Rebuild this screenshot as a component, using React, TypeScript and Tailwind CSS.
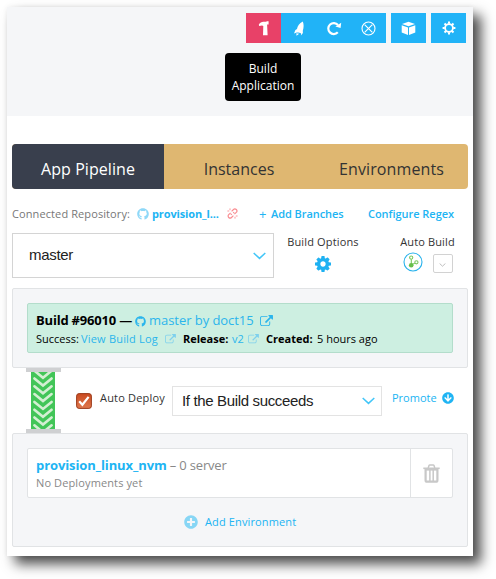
import React from "react";
import { FaGithub, FaPlusCircle, FaArrowCircleDown } from "react-icons/fa";

type IconProps = { className?: string };

const ExternalLink = ({ className }: IconProps) => (
  <svg viewBox="0 0 1792 1664" className={className} fill="currentColor">
    <path d="M1408 928v320q0 119-84.5 203.5t-203.5 84.5h-832q-119 0-203.5-84.5t-84.5-203.5v-832q0-119 84.5-203.5t203.5-84.5h704q14 0 23 9t9 23v64q0 14-9 23t-23 9h-704q-66 0-113 47t-47 113v832q0 66 47 113t113 47h832q66 0 113-47t47-113v-320q0-14 9-23t23-9h64q14 0 23 9t9 23zm384-864v512q0 26-19 45t-45 19-45-19l-176-176-652 652q-10 10-23 10t-23-10l-114-114q-10-10-10-23t10-23l652-652-176-176q-19-19-19-45t19-45 45-19h512q26 0 45 19t19 45z" />
  </svg>
);

const Cog = ({ className }: IconProps) => (
  <svg viewBox="128 128 1536 1536" className={className} fill="currentColor">
    <path d="M1152 896q0-106-75-181t-181-75-181 75-75 181 75 181 181 75 181-75 75-181zm512-109v222q0 12-8 23t-20 13l-185 28q-19 54-39 91 35 50 107 138 10 12 10 25t-9 23q-27 37-99 108t-94 71q-12 0-26-9l-138-108q-44 23-91 38-16 136-29 186-7 28-36 28h-222q-14 0-24.5-8.5t-11.5-21.5l-28-184q-49-16-90-37l-141 107q-10 9-25 9-14 0-25-11-126-114-165-168-7-10-7-23 0-12 8-23 15-21 51-66.5t54-70.5q-27-50-41-99l-183-27q-13-2-21-12.5t-8-23.5v-222q0-12 8-23t19-13l186-28q14-46 39-92-40-57-107-138-10-12-10-24 0-10 9-23 26-36 98.5-107.5t94.5-71.5q13 0 26 10l138 107q44-23 91-38 16-136 29-186 7-28 36-28h222q14 0 24.5 8.5t11.5 21.5l28 184q49 16 90 37l142-107q9-9 24-9 13 0 25 10 129 119 165 170 7 8 7 22 0 12-8 23-15 21-51 66.5t-54 70.5q26 50 41 98l183 28q13 2 21 12.5t8 23.5z" />
  </svg>
);

const Trash = ({ className }: IconProps) => (
  <svg viewBox="0 0 17 19" className={className} fill="none" stroke="currentColor">
    <path d="M5.2 4 6 1.6q.2-.6.9-.6h3.2q.7 0 .9.6l.8 2.4" strokeWidth="1.5" />
    <path d="M.3 4.3h16.4" strokeWidth="1.6" />
    <path d="M2.6 5v11.2q0 1.5 1.5 1.5h8.8q1.5 0 1.5-1.5V5" strokeWidth="2.2" />
    <path d="M2.6 5.8h11.8" strokeWidth="1.6" />
    <path d="M6.9 6v11M10.2 6v11" strokeWidth="1.5" />
  </svg>
);

const Chevron = ({ className }: IconProps) => (
  <svg viewBox="0 0 13 8" className={className} fill="none" stroke="currentColor" strokeWidth="1.5">
    <path d="M.7 1 6.5 6.4 12.3 1" />
  </svg>
);

const Hammer = () => (
  <svg viewBox="0 0 12 15" className="h-[15px] w-3" fill="currentColor">
    <path d="M.8 3.7C2 1.6 3.6.8 5.4.8H8l1-.6h1.6v3.4l-1.5-.2.5 10.8H5L5.3 5 4 4.4 1.2 5Z" />
  </svg>
);

const Rocket = () => (
  <svg viewBox="0 0 12 15" className="h-[15px] w-3" fill="currentColor">
    <path d="M9.8.6C6.3 2.2 4.6 5 4 8L2.4 9 1 12.6l2.8-1.2h1.5l2 .7.8.3-.2 2.1 2-2.4-.1-2.4C10.8 6.8 11 3.6 9.8.6Z" />
    <path d="m3.4 12.2 2.8.6-2.7 2Z" />
  </svg>
);

const Redo = () => (
  <svg viewBox="0 0 16 15" className="h-[15px] w-4" fill="none" stroke="currentColor" strokeWidth="2.2">
    <path d="M11.8 11.3A5.5 5.5 0 1 1 12 4" />
    <path d="M15.2 1.8 14.6 7 9.4 5.6Z" fill="currentColor" stroke="none" />
  </svg>
);

const CircleX = () => (
  <svg viewBox="0 0 15 15" className="size-[15px]" fill="none" stroke="currentColor" strokeWidth="1.1">
    <circle cx="7.5" cy="7.5" r="6.5" />
    <path d="m3.6 3.6 7.8 7.8m0-7.8-7.8 7.8" />
  </svg>
);

const Box = () => (
  <svg viewBox="0 0 15 15" className="size-[15px]" fill="currentColor">
    <path d="M7.5.8 14 3 7.5 5.3 1 3ZM.7 4.2 7 6.4v7.5L.7 11.5Zm13.6 0L8 6.4v7.5l6.3-2.4Z" />
  </svg>
);

const GearOutline = () => (
  <svg viewBox="0 0 14 14" className="size-3.5" fill="none" stroke="currentColor">
    <circle cx="7" cy="7" r="3.9" strokeWidth="1.8" />
    <path d="M7 .6v2.2M7 11.2v2.2M.6 7h2.2M11.2 7h2.2M2.5 2.5 4 4m6 6 1.5 1.5m0-9L10 4m-6 6-1.5 1.5" strokeWidth="2" />
  </svg>
);

const BrokenLink = () => (
  <svg viewBox="0 0 11 11" className="-mt-[2px] h-[11px] w-[11px] shrink-0 text-[#f98d92]" fill="none" stroke="currentColor" strokeWidth="1.2">
    <path d="m4.6 3.4 1.9-1.9a1.8 1.8 0 0 1 2.8 2.8L7.4 6.2M6.4 7.6 4.5 9.5a1.8 1.8 0 0 1-2.8-2.8l1.9-1.9M6.2 4.2l1 1M3.8 5.8l1 1" />
    <path d="M3 .4v1.8M.4 3h1.8M8 8.8v1.8M8.8 8h1.8" strokeWidth=".9" />
  </svg>
);

const Branch = () => (
  <svg viewBox="0 0 20 20" className="size-5 shrink-0" fill="none">
    <circle cx="10" cy="10" r="9" stroke="#28b2ec" strokeWidth="1.1" />
    <g stroke="#7cc95f" strokeWidth="1.1">
      <circle cx="8.2" cy="5.6" r="1.6" />
      <circle cx="13.4" cy="10.3" r="1.6" />
      <path d="M8.3 7.2v5M9 12.4l2.8-1.2" />
    </g>
    <circle cx="8.2" cy="13.2" r="2.3" fill="#67be4b" />
  </svg>
);

const chevrons = [-9.1, -1.3, 6.5, 14.3, 22.1, 29.9, 37.7, 45.5, 53.3];

const Conveyor = () => (
  <div className="ml-[14px] flex h-[65px] w-[35px] shrink-0 flex-col items-start">
    <div className="h-1 w-full bg-[#cfd0d2]" />
    <svg viewBox="0 0 24 57" className="ml-[5px] h-[57px] w-6 bg-[#42c558]" fill="none" stroke="#d3efd2" strokeWidth="2.6">
      {chevrons.map((y) => (
        <path key={y} d={`M3.4 ${y}l8.6 7 8.6-7`} strokeLinecap="round" />
      ))}
    </svg>
    <div className="h-1 w-full bg-[#cfd0d2]" />
  </div>
);

const Tool = ({ children, className }: { children: React.ReactNode; className: string }) => (
  <button className={`flex h-[30px] w-[35px] items-center justify-center text-white ${className}`}>{children}</button>
);

export default function App() {
  return (
    <div className="h-[579px] w-[496px] overflow-hidden bg-white pt-[7px] pl-[7px] font-['Open_Sans',sans-serif] text-[11px] whitespace-nowrap text-[#333]">
      <main className="h-[549px] w-[466px] bg-white shadow-[8px_8px_12px_rgba(0,0,0,0.7),0_0_5px_rgba(0,0,0,0.06)]">
        <header className="relative flex h-[109px] items-start bg-[#f5f6f8] pt-[6px] pl-[239px]">
          <Tool className="bg-[#e84168]"><Hammer /></Tool>
          <Tool className="bg-[#21b3f7]"><Rocket /></Tool>
          <Tool className="bg-[#21b3f7]"><Redo /></Tool>
          <Tool className="bg-[#21b3f7]"><CircleX /></Tool>
          <Tool className="ml-[5px] bg-[#21b3f7]"><Box /></Tool>
          <Tool className="ml-[5px] bg-[#21b3f7]"><GearOutline /></Tool>
          <div className="absolute top-[46px] left-[218px] flex h-12 w-[76px] flex-col items-center justify-center rounded bg-black text-[12px] leading-[17px] text-white">
            <span>Build</span>
            <span>Application</span>
          </div>
        </header>

        <section className="px-[5px] pt-7">
          <nav className="flex h-[45px] overflow-hidden rounded bg-[#dfb771] text-[16px] leading-[50px]">
            <div className="w-[152px] bg-[#393f4d] text-center tracking-[0.06px] text-white">App Pipeline</div>
            <div className="w-[152px] pr-[2px] text-center">Instances</div>
            <div className="w-[152px] pr-[1px] text-center tracking-[0.1px]">Environments</div>
          </nav>

          <div className="flex h-11 items-center pt-[6px] text-[#20b4f3]">
            <span className="w-[125px] tracking-[0.1px] text-[#777]">Connected Repository:</span>
            <FaGithub className="size-3 text-[#8ed8f8]" />
            <span className="ml-[3px] w-[75px] font-bold tracking-[-0.13px]">provision_l...</span>
            <BrokenLink />
            <span className="ml-[21px] w-3 text-[13px] leading-3">+</span>
            <span className="w-[97px] font-semibold tracking-[-0.06px]">Add Branches</span>
            <span className="font-semibold tracking-[-0.04px]">Configure Regex</span>
          </div>

          <div className="flex h-[45px]">
            <div className="flex h-[45px] w-[262px] items-center justify-between border border-[#d4d4d4] pr-[7px] pl-4 font-['Liberation_Sans',sans-serif] text-[15px] tracking-[-0.3px] text-[#222]">
              <span>master</span>
              <Chevron className="h-2 w-[13px] text-[#42c6f8]" />
            </div>
            <div className="ml-[13px] flex w-[72px] flex-col items-center">
              <span className="leading-[18px] tracking-[0.15px]">Build Options</span>
              <Cog className="mt-[5px] size-4 text-[#1eb1f2]" />
            </div>
            <div className="ml-[39px] flex w-[59px] flex-col items-center">
              <span className="leading-[18px] tracking-[0.15px]">Auto Build</span>
              <div className="mt-px flex w-[50px] items-start justify-between">
                <Branch />
                <span className="mt-[2px] flex h-[19px] w-5 items-center justify-center rounded-xs border border-[#d2d2d2]">
                  <Chevron className="mt-[2px] h-[4px] w-[7px] text-[#aaa]" />
                </span>
              </div>
            </div>
          </div>

          <div className="mt-[10px] h-20 rounded-xs border border-[#e1e3e5] bg-[#f5f6f8] p-[14px]">
            <div className="h-[50px] rounded-xs border border-[#b3ddcb] bg-[#cdefe1] px-2 text-black">
              <div className="mt-2 flex h-[18px] items-center text-[13px] text-[#2bb5ec]">
                <span className="w-[99px] font-bold tracking-[-0.2px] text-black">Build #96010 —</span>
                <FaGithub className="size-[11px]" />
                <span className="ml-[3px] w-[111px] tracking-[-0.05px]">master by doct15</span>
                <ExternalLink className="h-3 w-[13px]" />
              </div>
              <div className="flex h-[18px] items-center">
                <span className="w-[45px]">Success:</span>
                <span className="w-[84px] tracking-[0.2px] text-[#2bb5ec]">View Build Log</span>
                <ExternalLink className="h-[10px] w-[11px] text-[#7dd0ed]" />
                <span className="ml-[7px] w-[49px] font-bold">Release:</span>
                <span className="w-[16px] text-[#2bb5ec]">v2</span>
                <ExternalLink className="h-[10px] w-[11px] text-[#7dd0ed]" />
                <span className="ml-[7px] w-[51px] font-bold">Created:</span>
                <span>5 hours ago</span>
              </div>
            </div>
          </div>

          <div className="flex h-[65px]">
            <Conveyor />
            <svg viewBox="0 0 16 16" className="mt-[25px] ml-[15px] size-4 shrink-0">
              <defs>
                <linearGradient id="check" x2="0" y2="1">
                  <stop stopColor="#c94a20" />
                  <stop offset="1" stopColor="#e0794e" />
                </linearGradient>
              </defs>
              <rect x=".6" y=".6" width="14.8" height="14.8" rx="2.5" fill="url(#check)" stroke="#9b3b1b" />
              <path d="m3.2 8.2 3.2 3.5 6.2-7.8" fill="none" stroke="#fff" strokeWidth="2.2" />
            </svg>
            <span className="mt-[21px] ml-2 w-[72px] leading-[18px] tracking-[0.18px]">Auto Deploy</span>
            <div className="mt-[18px] flex h-[30px] w-[210px] items-center justify-between border border-[#e3e3e3] pr-[6px] pl-[9px] font-['Liberation_Sans',sans-serif] text-[15px] tracking-[-0.35px] text-[#222]">
              <span>If the Build succeeds</span>
              <Chevron className="h-2 w-[13px] text-[#42c6f8]" />
            </div>
            <span className="mt-[21px] ml-[10px] w-[50px] leading-[18px] text-[#20b4f3]">Promote</span>
            <FaArrowCircleDown className="mt-6 size-3 text-[#20b4f3]" />
          </div>

          <div className="h-[114px] rounded-xs border border-[#e1e3e5] bg-[#f5f6f8] px-[14px] pt-[14px] text-[#888]">
            <div className="flex h-[50px] rounded-xs border border-[#e1e3e5] bg-white">
              <div className="w-[383px] border-r border-[#e1e3e5] pt-[7px] pl-2">
                <div className="text-[13px] leading-[18px] tracking-[-0.18px]">
                  <b className="tracking-[-0.1px] text-[#20b4f3]">provision_linux_nvm</b> – 0 server
                </div>
                <div className="leading-[17px] tracking-[0.12px]">No Deployments yet</div>
              </div>
              <div className="flex grow items-center justify-center text-[#c8c8c8]">
                <Trash className="h-[19px] w-[17px]" />
              </div>
            </div>
            <div className="mt-[15px] ml-[157px] flex h-[18px] items-center text-[#20b4f3]">
              <FaPlusCircle className="size-[14px] text-[#87d6f5]" />
              <span className="ml-[7px] tracking-[0.13px]">Add Environment</span>
            </div>
          </div>
        </section>
      </main>
    </div>
  );
}
